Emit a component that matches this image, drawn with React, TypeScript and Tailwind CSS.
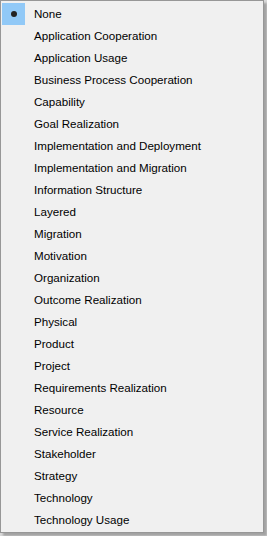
const items = [
  "None",
  "Application Cooperation",
  "Application Usage",
  "Business Process Cooperation",
  "Capability",
  "Goal Realization",
  "Implementation and Deployment",
  "Implementation and Migration",
  "Information Structure",
  "Layered",
  "Migration",
  "Motivation",
  "Organization",
  "Outcome Realization",
  "Physical",
  "Product",
  "Project",
  "Requirements Realization",
  "Resource",
  "Service Realization",
  "Stakeholder",
  "Strategy",
  "Technology",
  "Technology Usage",
];

export default function App() {
  return (
    <div className="h-[536px] w-[267px] bg-[#d9d9d9]" style={{ fontFamily: '"Liberation Sans", Arial, sans-serif' }}>
      <div className="h-[533px] w-[264px] border border-[#979797] bg-[#f0f0f0] pt-[2px] pl-[1px] shadow-[3px_3px_2px_rgba(0,0,0,0.25)]">
        {items.map((label, i) => (
          <div key={label} className="flex h-[22px] items-center">
            <div className={`flex h-[22px] w-[23px] items-center justify-center ${i === 0 ? "bg-[#91c9f7]" : ""}`}>
              {i === 0 && <span className="h-[6px] w-[6px] rounded-full bg-[#222]" />}
            </div>
            <span className="pl-[9px] text-[11.6px] text-black">{label}</span>
          </div>
        ))}
      </div>
    </div>
  );
}
